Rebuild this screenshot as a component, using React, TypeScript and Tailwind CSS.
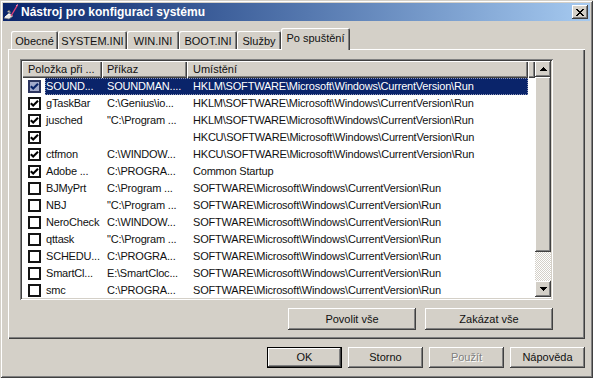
import React from "react";

const raised =
  "shadow-[inset_-1px_-1px_0_#404040,inset_1px_1px_0_#ffffff,inset_-2px_-2px_0_#808080,inset_2px_2px_0_#d4d0c8]";

type Row = { on: boolean; name: string; cmd: string; loc: string };

const rows: Row[] = [
  { on: true, name: "SOUND...", cmd: "SOUNDMAN....", loc: "HKLM\\SOFTWARE\\Microsoft\\Windows\\CurrentVersion\\Run" },
  { on: true, name: "gTaskBar", cmd: "C:\\Genius\\io...", loc: "HKLM\\SOFTWARE\\Microsoft\\Windows\\CurrentVersion\\Run" },
  { on: true, name: "jusched", cmd: "\"C:\\Program ...", loc: "HKLM\\SOFTWARE\\Microsoft\\Windows\\CurrentVersion\\Run" },
  { on: true, name: "", cmd: "", loc: "HKCU\\SOFTWARE\\Microsoft\\Windows\\CurrentVersion\\Run" },
  { on: true, name: "ctfmon", cmd: "C:\\WINDOW...", loc: "HKCU\\SOFTWARE\\Microsoft\\Windows\\CurrentVersion\\Run" },
  { on: true, name: "Adobe ...", cmd: "C:\\PROGRA...", loc: "Common Startup" },
  { on: false, name: "BJMyPrt", cmd: "C:\\Program ...", loc: "SOFTWARE\\Microsoft\\Windows\\CurrentVersion\\Run" },
  { on: false, name: "NBJ", cmd: "\"C:\\Program ...", loc: "SOFTWARE\\Microsoft\\Windows\\CurrentVersion\\Run" },
  { on: false, name: "NeroCheck", cmd: "C:\\WINDOW...", loc: "SOFTWARE\\Microsoft\\Windows\\CurrentVersion\\Run" },
  { on: false, name: "qttask", cmd: "\"C:\\Program ...", loc: "SOFTWARE\\Microsoft\\Windows\\CurrentVersion\\Run" },
  { on: false, name: "SCHEDU...", cmd: "C:\\PROGRA...", loc: "SOFTWARE\\Microsoft\\Windows\\CurrentVersion\\Run" },
  { on: false, name: "SmartCl...", cmd: "E:\\SmartCloc...", loc: "SOFTWARE\\Microsoft\\Windows\\CurrentVersion\\Run" },
  { on: false, name: "smc", cmd: "C:\\PROGRA...", loc: "SOFTWARE\\Microsoft\\Windows\\CurrentVersion\\Run" },
];

function Check({ on, sel }: { on: boolean; sel: boolean }) {
  return (
    <div
      className={
        sel
          ? "w-[13px] h-[13px] shrink-0 border-2 border-[#2c3560] bg-[#a3aacb] flex items-center justify-center"
          : "w-[13px] h-[13px] shrink-0 border-2 border-[#141414] bg-white flex items-center justify-center"
      }
    >
      {on && (
        <svg width="9" height="9" viewBox="0 0 9 9">
          <path d="M0.8 4.2L3.2 6.6L8 1.8" fill="none" stroke={sel ? "#0a246a" : "#000"} strokeWidth="2.1" />
        </svg>
      )}
    </div>
  );
}

function Btn({ w, h, children, def, dis }: { w: string; h: string; children: React.ReactNode; def?: boolean; dis?: boolean }) {
  return (
    <div
      className={`${w} ${h} ${raised} flex items-center justify-center ${def ? "border border-black" : ""} ${
        dis ? "text-[#808080] [text-shadow:1px_1px_0_#ffffff]" : ""
      }`}
    >
      {children}
    </div>
  );
}

function Tab({ w, children, sel }: { w: string; children: React.ReactNode; sel?: boolean }) {
  if (sel)
    return (
      <div
        className={`${w} h-[22px] -mb-[1px] relative z-10 bg-[#d4d0c8] flex justify-center pt-[4px] rounded-t-[2px] shadow-[inset_1px_1px_0_#ffffff,inset_-1px_0_0_#404040,inset_-2px_0_0_#808080]`}
      >
        {children}
      </div>
    );
  return (
    <div
      className={`${w} h-[18px] flex justify-center pt-[4px] rounded-t-[2px] shadow-[inset_1px_1px_0_#ffffff,inset_-1px_0_0_#404040,inset_-2px_0_0_#808080]`}
    >
      {children}
    </div>
  );
}

function HeadCell({ w, children, pl }: { w: string; children?: React.ReactNode; pl: string }) {
  return (
    <div
      className={`${w} ${pl} h-full shrink-0 flex items-center whitespace-nowrap overflow-hidden shadow-[inset_1px_1px_0_#ffffff,inset_-1px_-1px_0_#404040,inset_-2px_-2px_0_#808080]`}
    >
      {children}
    </div>
  );
}

export default function App() {
  return (
    <div className="w-[593px] h-[378px] overflow-hidden bg-[#d4d0c8] font-['Liberation_Sans',Arial,sans-serif] text-[11px] leading-[13px] text-[#111] p-[3px] flex flex-col shadow-[inset_1px_1px_0_#d4d0c8,inset_-1px_-1px_0_#404040,inset_2px_2px_0_#ffffff,inset_-2px_-2px_0_#808080]">
      {/* Title bar */}
      <div className="h-[18px] shrink-0 flex items-center bg-linear-to-r from-[#0a246a] to-[#a6caf0] pr-[2px]">
        <svg width="16" height="16" viewBox="0 0 16 16" className="shrink-0">
          <path d="M1 14 L6 9 L10 12 L6 15 Z" fill="#e8e8e8" stroke="#808080" strokeWidth="0.8" />
          <path d="M2 13 L6 10 L8 11.5" fill="none" stroke="#ffffff" strokeWidth="1" />
          <path d="M4 8 L6 6 L8 9" fill="#c0c0c0" stroke="#606060" strokeWidth="0.8" />
          <path d="M8 12 L14.5 1" stroke="#e0407a" strokeWidth="1.4" />
          <path d="M13 2 L15 0.5" stroke="#ff90b8" strokeWidth="1" />
        </svg>
        <div className="ml-[2px] text-white font-bold text-[12px] leading-[14px] whitespace-nowrap">
          Nástroj pro konfiguraci systému
        </div>
        <div className="flex-1" />
        <div className={`w-[16px] h-[14px] bg-[#d4d0c8] ${raised} flex items-center justify-center`}>
          <svg width="8" height="7" viewBox="0 0 8 7" shapeRendering="crispEdges">
            <path
              d="M0 0h2v1h-2z M6 0h2v1h-2z M1 1h2v1h-2z M5 1h2v1h-2z M2 2h4v1h-4z M3 3h2v1h-2z M2 4h4v1h-4z M1 5h2v1h-2z M5 5h2v1h-2z M0 6h2v1h-2z M6 6h2v1h-2z"
              fill="#000"
            />
          </svg>
        </div>
      </div>

      {/* Body */}
      <div className="flex-1 flex flex-col pl-[5px]">
        {/* Tab strip */}
        <div className="h-[28px] shrink-0 flex items-end pl-[3px]">
          <Tab w="w-[47px]">Obecné</Tab>
          <Tab w="w-[69px]">SYSTEM.INI</Tab>
          <Tab w="w-[52px]">WIN.INI</Tab>
          <Tab w="w-[58px]">BOOT.INI</Tab>
          <Tab w="w-[44px]">Služby</Tab>
          <Tab w="w-[69px]" sel>
            Po spuštění
          </Tab>
        </div>

        {/* Panel */}
        <div className="w-[577px] h-[290px] shrink-0 pt-[10px] pl-[12px] flex flex-col shadow-[inset_1px_1px_0_#ffffff,inset_-1px_-1px_0_#404040,inset_-2px_-2px_0_#808080]">
          {/* List view */}
          <div className="w-[533px] h-[241px] shrink-0 bg-white p-[2px] flex shadow-[inset_1px_1px_0_#808080,inset_-1px_-1px_0_#ffffff,inset_2px_2px_0_#404040,inset_-2px_-2px_0_#d4d0c8]">
            <div className="w-[513px] h-full flex flex-col overflow-hidden">
              <div className="h-[17px] shrink-0 flex bg-[#d4d0c8]">
                <HeadCell w="w-[80px]" pl="pl-[6px]">
                  Položka při ...
                </HeadCell>
                <HeadCell w="w-[85px]" pl="pl-[5px]">
                  Příkaz
                </HeadCell>
                <HeadCell w="w-[341px]" pl="pl-[6px]">
                  Umístění
                </HeadCell>
                <HeadCell w="w-[7px]" pl="pl-0" />
              </div>
              {rows.map((r, i) => {
                const sel = i === 0;
                return (
                  <div key={i} className="h-[17px] shrink-0 flex items-center">
                    <div className="w-[6px] shrink-0" />
                    <Check on={r.on} sel={sel} />
                    <div className="w-[4px] shrink-0" />
                    <div
                      className={
                        sel
                          ? "h-full w-[483px] flex items-center bg-[#0a246a] text-white outline-1 outline-dotted outline-[#8f97b8] -outline-offset-1 tracking-[-0.2px]"
                          : "h-full w-[483px] flex items-center tracking-[-0.2px]"
                      }
                    >
                      <div className="w-[57px] shrink-0 pl-[1px] whitespace-nowrap overflow-hidden">{r.name}</div>
                      <div className="w-[85px] shrink-0 pl-[5px] whitespace-nowrap overflow-hidden">{r.cmd}</div>
                      <div className="w-[341px] shrink-0 pl-[6px] whitespace-nowrap overflow-hidden">{r.loc}</div>
                    </div>
                  </div>
                );
              })}
            </div>
            {/* Scrollbar */}
            <div className="w-[16px] h-full flex flex-col">
              <div className={`h-[16px] shrink-0 bg-[#d4d0c8] ${raised} flex items-center justify-center`}>
                <svg width="7" height="4" viewBox="0 0 7 4" shapeRendering="crispEdges">
                  <path d="M3 0h1v1h-1z M2 1h3v1h-3z M1 2h5v1h-5z M0 3h7v1h-7z" fill="#000" />
                </svg>
              </div>
              <div className={`h-[175px] shrink-0 bg-[#d4d0c8] ${raised}`} />
              <div className="h-[29px] shrink-0 bg-[image:repeating-conic-gradient(#d4d0c8_0%_25%,#ffffff_0%_50%)] bg-[length:2px_2px]" />
              <div className={`h-[16px] shrink-0 bg-[#d4d0c8] ${raised} flex items-center justify-center`}>
                <svg width="7" height="4" viewBox="0 0 7 4" shapeRendering="crispEdges">
                  <path d="M0 0h7v1h-7z M1 1h5v1h-5z M2 2h3v1h-3z M3 3h1v1h-1z" fill="#000" />
                </svg>
              </div>
            </div>
          </div>

          {/* Enable / disable all */}
          <div className="w-[533px] mt-[8px] flex justify-end gap-[9px]">
            <Btn w="w-[128px]" h="h-[22px]">
              Povolit vše
            </Btn>
            <Btn w="w-[128px]" h="h-[22px]">
              Zakázat vše
            </Btn>
          </div>
        </div>

        {/* Dialog buttons */}
        <div className="mt-[8px] flex justify-end gap-[6px] pr-[5px]">
          <Btn w="w-[75px]" h="h-[21px]" def>
            OK
          </Btn>
          <Btn w="w-[75px]" h="h-[21px]">
            Storno
          </Btn>
          <Btn w="w-[75px]" h="h-[21px]" dis>
            Použít
          </Btn>
          <Btn w="w-[75px]" h="h-[21px]">
            Nápověda
          </Btn>
        </div>
      </div>
    </div>
  );
}
